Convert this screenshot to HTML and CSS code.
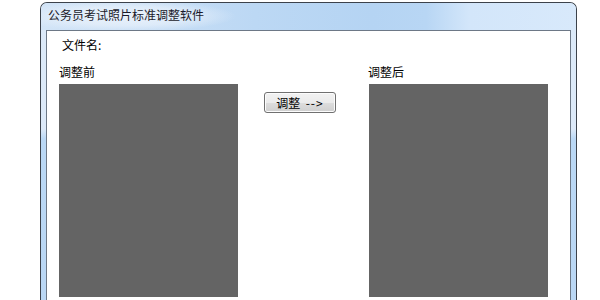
FILE: index.html
```html
<!DOCTYPE html>
<html lang="zh">
<head>
<meta charset="utf-8">
<title>公务员考试照片标准调整软件</title>
<link rel="stylesheet" href="styles.css">
</head>
<body>
<div class="window">
  <div class="titlebar">公务员考试照片标准调整软件</div>
  <div class="client">
    <div class="filename">文件名:</div>
    <div class="panels">
      <div class="panel">
        <div class="label">调整前</div>
        <div class="photo"></div>
      </div>
      <button class="adjust">调整&nbsp;&nbsp;<span class="arrow">--&gt;</span></button>
      <div class="panel panel-right">
        <div class="label">调整后</div>
        <div class="photo"></div>
      </div>
    </div>
  </div>
</div>
</body>
</html>
```
FILE: styles.css
```css
html, body {
  margin: 0;
  padding: 0;
  background: #ffffff;
  overflow: hidden;
}
body {
  width: 600px;
  height: 300px;
  padding: 2px 0 0 40px;
  box-sizing: border-box;
  font-family: "Noto Sans CJK SC", "DejaVu Sans", sans-serif;
  font-size: 12px;
  color: #000;
}
.window {
  width: 537px;
  height: 298px;
  box-sizing: border-box;
  border: 1px solid #3c424b;
  border-bottom: none;
  border-radius: 7px 7px 0 0;
  background: linear-gradient(to bottom, #dbe9f8 0, #dce9f8 126px, #bad8f5 136px, #bad7f4 100%);
  overflow: hidden;
}
.titlebar {
  height: 27px;
  line-height: 24px;
  padding-left: 7px;
  color: #1a1a2a;
  font-size: 12px;
  white-space: nowrap;
  background:
    radial-gradient(ellipse 110px 16px at 85px 13px, rgba(236,243,251,0.95) 0, rgba(236,243,251,0.6) 60%, rgba(236,243,251,0) 100%),
    linear-gradient(to right, #d2e4f7 0, #bcd8f4 40%, #b5d4f3 62%, #b8d6f4 72%, #d3e6fa 80%, #d8e9fb 100%);
}
.client {
  margin: 0 5px;
  height: 270px;
  box-sizing: border-box;
  background: #ffffff;
  border: 1px solid #6d7886;
  border-bottom: none;
  padding: 0 0 0 12px;
  overflow: hidden;
}
.filename {
  margin: 6px 0 0 3px;
  line-height: 16px;
  height: 16px;
}
.panels {
  display: flex;
  align-items: flex-start;
  margin-top: 11px;
}
.panel {
  display: flex;
  flex-direction: column;
  width: 179px;
}
.label {
  line-height: 16px;
  height: 16px;
}
.panel-right .label {
  margin-left: -1px;
}
.photo {
  margin-top: 4px;
  width: 179px;
  height: 213px;
  background: #646464;
}
.adjust {
  margin: 28px 33px 0 26px;
  width: 72px;
  height: 21px;
  padding: 0;
  box-sizing: border-box;
  border: 1px solid #707070;
  border-radius: 3px;
  background: linear-gradient(to bottom, #f2f2f2 0, #ebebeb 50%, #dddddd 51%, #cfcfcf 100%);
  font-family: "Noto Sans CJK SC", "DejaVu Sans", sans-serif;
  font-size: 12px;
  line-height: 18px;
  color: #000;
  box-shadow: inset 0 0 0 1px #fcfcfc;
}
.arrow {
  letter-spacing: 1px;
}
```
